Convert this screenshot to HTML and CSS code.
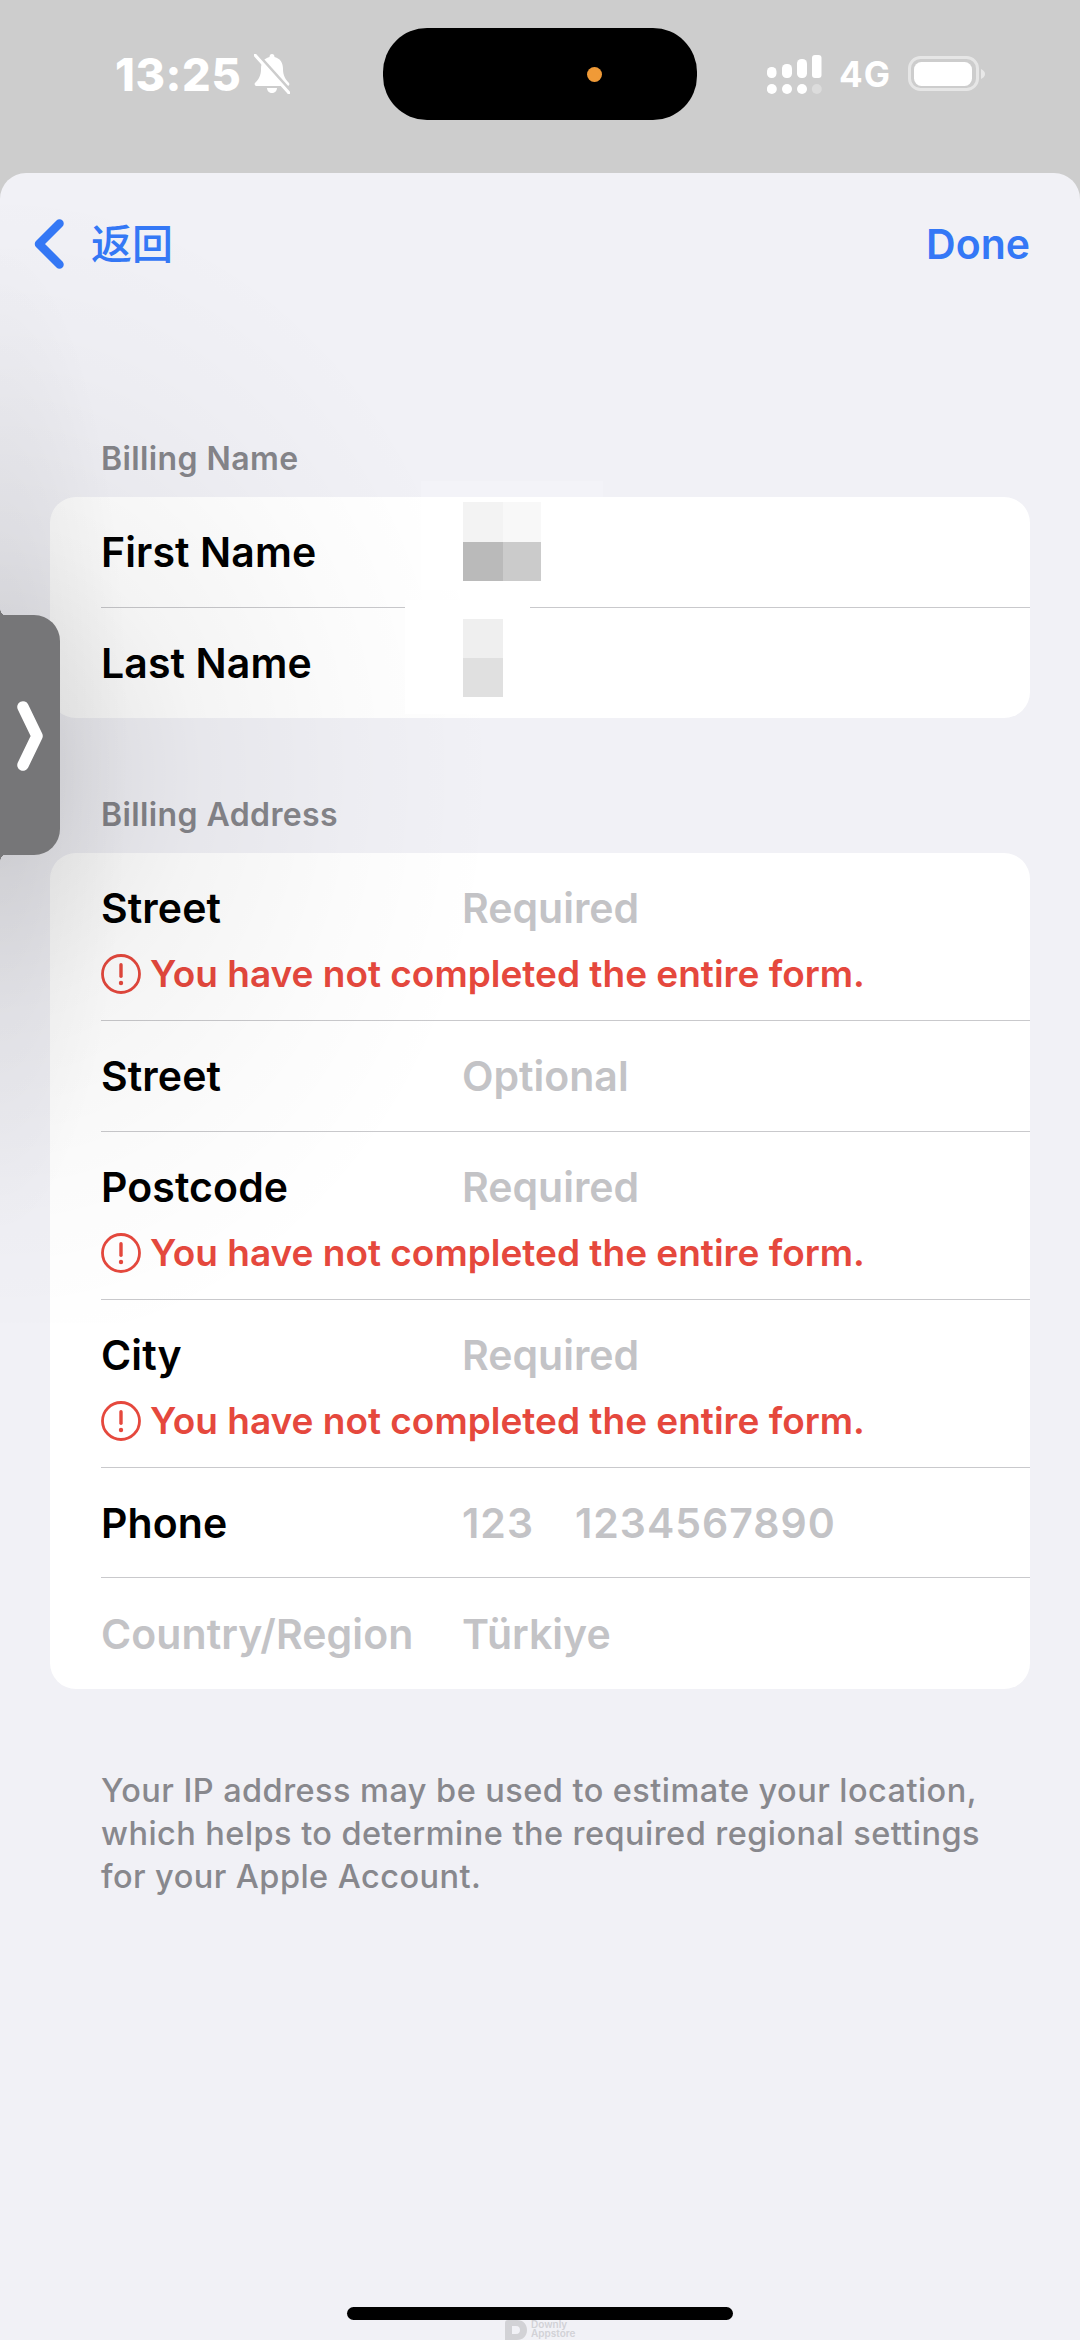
FILE: index.html
```html
<!DOCTYPE html>
<html lang="en">
<head>
<meta charset="utf-8">
<title>Billing</title>
<link rel="stylesheet" href="styles.css">
</head>
<body>
<div class="phone">
  <header class="status">
    <div class="status-left">
      <span class="time">13:25</span>
      <svg class="bell" viewBox="0 0 36 40"><path d="M15.500 3c0-2 1-3 2.500-3s2.500 1 2.500 3c6 1.500 8.500 6 8.500 12 0 6 2 10 6 14 1 1 0 3-1.500 3H2.500C1 32 0 30 1 29c4-4 6-8 6-14 0-6 2.500-10.500 8.500-12zM13 34h10c0 3-2.500 5-5 5s-5-2-5-5z" fill="#fff"/><path d="M-2 0l36 40" stroke="#cdcdcd" stroke-width="4" transform="translate(2.500 -2.500)"/><path d="M1 1l34 38" stroke="#fff" stroke-width="3" stroke-linecap="round"/></svg>
    </div>
    <div class="island"><span class="dot"></span></div>
    <div class="status-right">
      <svg class="signal" viewBox="0 0 55 39"><g fill="#fff"><rect x="0" y="12" width="9.500" height="11" rx="4.500"/><rect x="15" y="9" width="10" height="14" rx="4.500"/><rect x="30" y="4" width="10" height="19" rx="4.500"/><rect x="45" y="0" width="9.500" height="23" rx="3"/><circle cx="4.800" cy="34" r="5"/><circle cx="20" cy="34" r="5"/><circle cx="35" cy="34" r="5"/><circle cx="49.800" cy="34" r="5" opacity=".3"/></g></svg>
      <span class="net">4G</span>
      <svg class="battery" viewBox="0 0 78 36"><rect x="1.500" y="1.500" width="68" height="32" rx="11" fill="none" stroke="#fff" stroke-opacity=".5" stroke-width="3"/><rect x="6" y="6" width="58" height="24" rx="7.500" fill="#fff"/><path d="M73 13c2.500 1 4 3 4 5s-1.500 4-4 5z" fill="#fff" fill-opacity=".55"/></svg>
    </div>
  </header>

  <main class="sheet">
    <nav class="nav">
      <div class="back">
        <svg class="chev" viewBox="0 0 32 50"><path d="M26.500 4.500L6 25l20.500 20.500" fill="none" stroke="#3478f6" stroke-width="8.500" stroke-linecap="round" stroke-linejoin="round"/></svg>
        <span class="back-text">返回</span>
      </div>
      <span class="done">Done</span>
    </nav>

    <section class="section first">
      <h2 class="section-label">Billing Name</h2>
      <div class="card">
        <div class="row"><div class="row-main"><span class="label">First Name</span></div></div>
        <div class="row last"><div class="row-main"><span class="label">Last Name</span></div></div>
      </div>
    </section>

    <section class="section">
      <h2 class="section-label">Billing Address</h2>
      <div class="card">
        <div class="row">
          <div class="row-main"><span class="label">Street</span><span class="value">Required</span></div>
          <div class="error"><svg class="err-icon" viewBox="0 0 40 40"><circle cx="20" cy="20" r="18.500" fill="none" stroke="#e5483d" stroke-width="2.800"/><rect x="18.300" y="9" width="3.400" height="15" rx="1.700" fill="#e5483d"/><circle cx="20" cy="29" r="2.200" fill="#e5483d"/></svg><span>You have not completed the entire form.</span></div>
        </div>
        <div class="row">
          <div class="row-main"><span class="label">Street</span><span class="value">Optional</span></div>
        </div>
        <div class="row">
          <div class="row-main"><span class="label">Postcode</span><span class="value">Required</span></div>
          <div class="error"><svg class="err-icon" viewBox="0 0 40 40"><circle cx="20" cy="20" r="18.500" fill="none" stroke="#e5483d" stroke-width="2.800"/><rect x="18.300" y="9" width="3.400" height="15" rx="1.700" fill="#e5483d"/><circle cx="20" cy="29" r="2.200" fill="#e5483d"/></svg><span>You have not completed the entire form.</span></div>
        </div>
        <div class="row">
          <div class="row-main"><span class="label">City</span><span class="value">Required</span></div>
          <div class="error"><svg class="err-icon" viewBox="0 0 40 40"><circle cx="20" cy="20" r="18.500" fill="none" stroke="#e5483d" stroke-width="2.800"/><rect x="18.300" y="9" width="3.400" height="15" rx="1.700" fill="#e5483d"/><circle cx="20" cy="29" r="2.200" fill="#e5483d"/></svg><span>You have not completed the entire form.</span></div>
        </div>
        <div class="row short">
          <div class="row-main"><span class="label">Phone</span><span class="value code">123</span><span class="value num">1234567890</span></div>
        </div>
        <div class="row last tall">
          <div class="row-main"><span class="label muted">Country/Region</span><span class="value">Türkiye</span></div>
        </div>
      </div>
    </section>

    <p class="note">Your IP address may be used to estimate your location,<br>which helps to determine the required regional settings<br>for your Apple Account.</p>
  </main>

  <div class="glow"></div>
  <div class="patch patch-a"><i class="cell c1"></i><i class="cell c2"></i><i class="cell c3"></i><i class="cell c4"></i></div>
  <div class="patch patch-b"><i class="cell c5"></i><i class="cell c6"></i></div>
  <div class="handle"><svg class="handle-chev" viewBox="0 0 26 70"><path d="M6 6l14 29L6 64" fill="none" stroke="#fff" stroke-width="11.500" stroke-linecap="round" stroke-linejoin="round"/></svg></div>
  <div class="home"></div>
  <div class="mark">
    <svg class="mark-logo" viewBox="0 0 22 20"><path d="M3 0h9c6 0 10 4 10 10s-4 10-10 10H0V3c0-2 1-3 3-3zm4 6v8h4c3 0 4-2 4-4s-1-4-4-4z" fill="#d2d2d6"/></svg>
    <div class="mark-text"><span>Downly</span><span>Appstore</span></div>
  </div>
</div>
</body>
</html>
```
FILE: styles.css
```css
* { box-sizing: border-box; }
html, body { margin: 0; padding: 0; }
body { font-family: Inter, "Noto Sans CJK SC", sans-serif; background: #cdcdcd; }
.phone { position: relative; width: 1080px; height: 2340px; overflow: hidden; background: #cdcdcd; }

.status { height: 173px; display: grid; grid-template-columns: 383px 314px 383px; padding-top: 28px; align-items: start; color: #fff; }
.status-left { display: flex; align-items: center; height: 92px; padding-left: 115px; gap: 13px; }
.time { font-size: 45px; font-weight: 800; letter-spacing: .6px; }
.bell { width: 36px; height: 40px; }
.island { width: 314px; height: 92px; background: #000; border-radius: 44px; display: flex; align-items: center; padding-left: 204px; }
.dot { width: 15px; height: 15px; border-radius: 50%; background: #f09a37; }
.status-right { display: flex; align-items: center; height: 92px; padding-left: 70px; }
.signal { width: 55px; height: 39px; margin-right: 17px; }
.net { font-size: 35px; font-weight: 700; letter-spacing: 1px; width: 69px; }
.battery { width: 78px; height: 36px; }

.sheet { height: 2167px; background: #f1f1f6; border-radius: 26px 26px 0 0; }
.nav { height: 142px; display: flex; justify-content: space-between; align-items: flex-start; padding: 45px 50px 0 33px; color: #3478f6; }
.back { display: flex; align-items: center; height: 52px; }
.chev { width: 32px; height: 50px; }
.back-text { font-family: "Noto Sans CJK SC", sans-serif; font-size: 41px; font-weight: 500; margin-left: 26px; position: relative; top: -3px; }
.done { font-size: 41px; font-weight: 600; line-height: 52px; }

.section { margin: 77px 50px 0; }
.section.first { margin-top: 124px; }
.section-label { margin: 0 0 18px; padding-left: 51px; height: 40px; font-size: 32px; font-weight: 600; line-height: 40px; letter-spacing: .4px; color: #85858a; }
.card { background: #fff; border-radius: 26px; overflow: hidden; }
.row { margin-left: 51px; border-bottom: 1px solid #c9c9cc; }
.row.last { border-bottom: 0; }
.row-main { height: 110px; display: flex; align-items: center; }
.row.short .row-main { height: 109px; }
.row.tall .row-main { height: 111px; }
.label { width: 361px; flex: none; font-size: 41px; font-weight: 600; letter-spacing: .1px; color: #000; white-space: nowrap; }
.label.muted, .value { color: #c3c3c6; font-size: 41px; font-weight: 600; }
.value.code { margin-right: 41px; letter-spacing: 1px; }
.value.num { letter-spacing: 1px; }
.error { height: 57px; margin-top: -9px; display: flex; align-items: flex-start; gap: 9px; color: #e5483d; font-size: 37px; font-weight: 600; line-height: 40px; }
.row:has(.error) { padding-bottom: 9px; }
.err-icon { width: 40px; height: 40px; flex: none; }

.note { margin: 80px 0 0; padding-left: 101px; font-size: 32.500px; font-weight: 500; line-height: 43px; letter-spacing: .45px; color: #88888d; white-space: nowrap; }

.glow { position: absolute; left: 0; top: 173px; width: 800px; height: 1150px; pointer-events: none; background:
  radial-gradient(ellipse 130px 500px at 0 567px, rgba(0,0,0,.07), rgba(0,0,0,0) 100%),
  radial-gradient(ellipse 500px 590px at 0 600px, rgba(0,0,0,.14), rgba(0,0,0,.085) 17%, rgba(0,0,0,.045) 40%, rgba(0,0,0,.015) 72%, rgba(0,0,0,0) 100%); }
.patch { position: absolute; background: #fff; }
.patch-a { left: 421px; top: 481px; width: 182px; height: 109px; background: linear-gradient(#f3f3f8 16px, #fff 16px); }
.patch-b { left: 405px; top: 610px; width: 150px; height: 104px; }
.patch-b::before { content: ""; position: absolute; left: 0; top: -10px; width: 125px; height: 10px; background: #fff; }
.cell { position: absolute; display: block; }
.c1 { left: 42px; top: 21px; width: 40px; height: 40px; background: #f3f3f3; }
.c2 { left: 82px; top: 21px; width: 38px; height: 40px; background: #f8f8f8; }
.c3 { left: 42px; top: 61px; width: 40px; height: 39px; background: #bababa; }
.c4 { left: 82px; top: 61px; width: 38px; height: 39px; background: #cbcbcb; }
.c5 { left: 58px; top: 9px; width: 40px; height: 39px; background: #efefef; }
.c6 { left: 58px; top: 48px; width: 40px; height: 39px; background: #e0e0e0; }

.handle { position: absolute; left: 0; top: 615px; width: 60px; height: 240px; background: #767678; border-radius: 0 26px 26px 0; }
.handle::before, .handle::after { content: ""; position: absolute; left: 0; width: 7px; height: 7px; }
.handle::before { top: -6px; background: radial-gradient(circle at 100% 0, transparent 6.500px, #767678 7px); }
.handle::after { bottom: -6px; background: radial-gradient(circle at 100% 100%, transparent 6.500px, #767678 7px); }
.handle-chev { position: absolute; left: 17px; top: 86px; width: 26px; height: 70px; }
.home { position: absolute; left: 347px; top: 2307px; width: 386px; height: 13px; background: #000; border-radius: 7px; }
.mark { position: absolute; left: 505px; top: 2320px; display: flex; gap: 4px; }
.mark-logo { width: 22px; height: 20px; }
.mark-text { display: flex; flex-direction: column; font-size: 10px; line-height: 9px; font-weight: 600; color: #d2d2d6; }
```
